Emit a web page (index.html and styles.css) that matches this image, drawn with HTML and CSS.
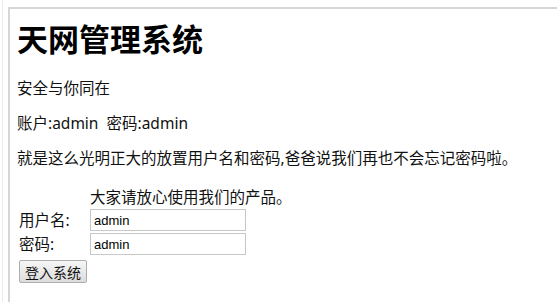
FILE: index.html
```html
<!DOCTYPE html>
<html lang="zh-CN">
<head>
  <meta charset="UTF-8" />
  <title>天网管理系统</title>
  <link rel="stylesheet" href="styles.css">
</head>
<body>
  <div class="window">
    <div class="frame">
      <h1>天网管理系统</h1>
      <p>安全与你同在</p>
      <p>账户:admin&nbsp;&nbsp;密码:admin</p>
      <p>就是这么光明正大的放置用户名和密码,爸爸说我们再也不会忘记密码啦。</p>
      <form class="login" onsubmit="return false">
        <span></span>
        <span class="note">大家请放心使用我们的产品。</span>
        <label for="user">用户名:</label>
        <input id="user" type="text" value="admin">
        <label for="pass">密码:</label>
        <input id="pass" type="text" value="admin">
        <button type="submit">登入系统</button>
      </form>
    </div>
  </div>
</body>
</html>
```

FILE: styles.css
```css
html, body {
  margin: 0;
  height: 100%;
  background: #fff;
}
body {
  font-family: "Noto Sans", "Noto Sans CJK SC", sans-serif;
  color: #111;
  border-left: 1px solid #ececec;
  margin-left: 2px;
}
.window {
  margin-left: 5px;
  height: 296px;
  border-left: 2px solid #d6d6d6;
}
.frame {
  margin-top: 7px;
  border-top: 2px solid #d6d6d6;
  padding: 0 7px;
}
h1 {
  font-family: "Noto Sans CJK SC", sans-serif;
  font-size: 31px;
  line-height: 46px;
  margin: 6px 0 17px;
  color: #000;
}
p {
  font-size: 15.5px;
  line-height: 20px;
  margin: 0 0 15px;
}
.login {
  display: grid;
  grid-template-columns: 69px 158px;
  column-gap: 2px;
  row-gap: 2px;
  align-items: center;
  padding-left: 2px;
  margin-top: 19px;
}
.note {
  font-size: 15.5px;
  line-height: 20px;
  white-space: nowrap;
}
label {
  font-size: 15.5px;
  line-height: 20px;
}
input {
  box-sizing: border-box;
  width: 156px;
  height: 22px;
  margin: 0;
  padding: 1px 3px;
  border: 1px solid #c8c8c8;
  font-family: "Liberation Sans", sans-serif;
  font-size: 13px;
  color: #000;
}
button {
  grid-column: 1;
  justify-self: start;
  margin-top: 3px;
  width: 68px;
  height: 23px;
  padding: 0;
  border: 1px solid #adadad;
  border-radius: 2px;
  background: linear-gradient(#f6f6f6, #dcdcdc);
  font-family: "Noto Sans CJK SC", sans-serif;
  font-size: 14px;
  color: #111;
}
```
